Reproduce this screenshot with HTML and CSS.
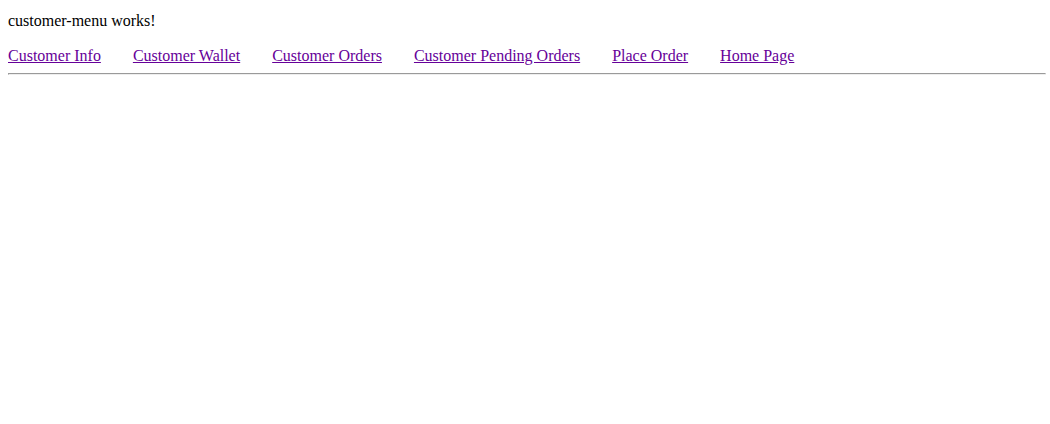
FILE: index.html
```html
<!DOCTYPE html>
<html>
<head>
<meta charset="utf-8">
<link rel="stylesheet" href="styles.css">
</head>
<body>
<p class="title">customer-menu works!</p>
<nav class="menu">
<a href="#">Customer Info</a>
<a href="#">Customer Wallet</a>
<a href="#">Customer Orders</a>
<a href="#">Customer Pending Orders</a>
<a href="#">Place Order</a>
<a href="#">Home Page</a>
</nav>
<hr class="rule">
</body>
</html>
```
FILE: styles.css
```css
body {
  margin: 12px 4px 8px 8px;
  font-family: "Liberation Serif", "Times New Roman", serif;
  font-size: 16px;
  color: #000;
  background: #fff;
}
.title {
  margin: 0 0 17px;
}
.menu {
  display: flex;
  gap: 32px;
}
.menu a {
  color: #660099;
}
```
